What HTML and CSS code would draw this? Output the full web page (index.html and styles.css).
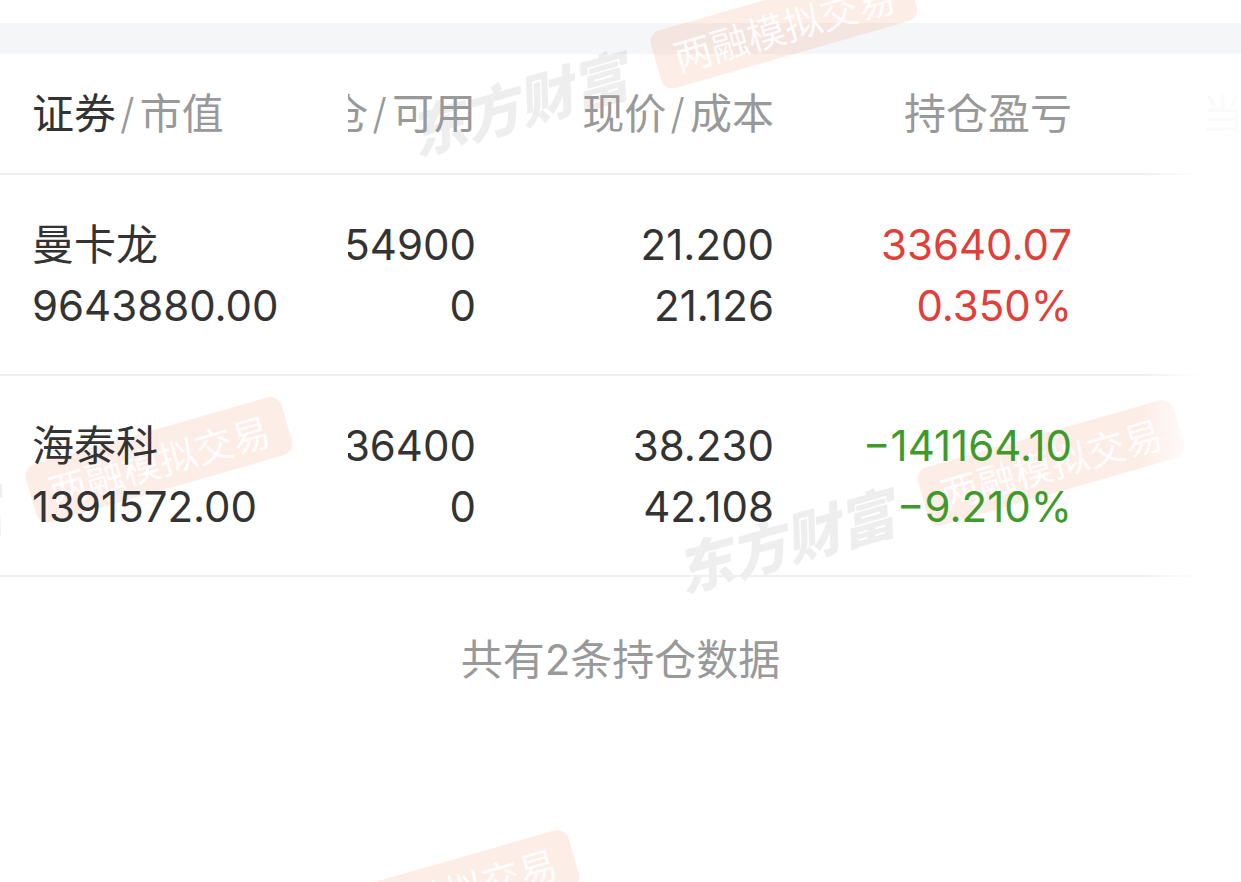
FILE: index.html
```html
<!DOCTYPE html>
<html lang="zh-CN">
<head>
<meta charset="utf-8">
<title>持仓</title>
<link rel="stylesheet" href="styles.css">
</head>
<body>
<div class="top-space"></div>
<div class="band"></div>

<div class="table">
  <div class="row head">
    <div class="fixed"><div class="hline"><span class="dark">证券</span><span class="sl">/</span>市值</div></div>
    <div class="view">
      <div class="track">
        <div class="c"><div class="hline">持仓<span class="sl">/</span>可用</div></div>
        <div class="c"><div class="hline">现价<span class="sl">/</span>成本</div></div>
        <div class="c"><div class="hline">持仓盈亏</div></div>
        <div class="c"><div class="hline">当日盈亏</div></div>
      </div>
    </div>
  </div>

  <div class="row item">
    <div class="fixed"><div class="line">曼卡龙</div><div class="line">9643880.00</div></div>
    <div class="view">
      <div class="track">
        <div class="c"><div class="line">54900</div><div class="line">0</div></div>
        <div class="c"><div class="line">21.200</div><div class="line">21.126</div></div>
        <div class="c up"><div class="line">33640.07</div><div class="line">0.350%</div></div>
        <div class="c"><div class="line">0.00</div><div class="line">0.00%</div></div>
      </div>
    </div>
  </div>

  <div class="row item">
    <div class="fixed"><div class="line">海泰科</div><div class="line">1391572.00</div></div>
    <div class="view">
      <div class="track">
        <div class="c"><div class="line">36400</div><div class="line">0</div></div>
        <div class="c"><div class="line">38.230</div><div class="line">42.108</div></div>
        <div class="c down"><div class="line">−141164.10</div><div class="line">−9.210%</div></div>
        <div class="c"><div class="line">0.00</div><div class="line">0.00%</div></div>
      </div>
    </div>
  </div>

  <div class="fade"></div>
</div>

<div class="footer">共有2条持仓数据</div>

<div class="wm wm1"><span class="wm-brand">东方财富</span><span class="wm-badge">两融模拟交易</span></div>
<div class="wm wm2"><span class="wm-brand">东方财富</span><span class="wm-badge">两融模拟交易</span></div>
<div class="wm wm3"><span class="wm-brand">东方财富</span><span class="wm-badge">两融模拟交易</span></div>
<div class="wm wm4"><span class="wm-brand">东方财富</span><span class="wm-badge">两融模拟交易</span></div>
</body>
</html>
```

FILE: styles.css
```css
* { box-sizing: border-box; margin: 0; padding: 0; }

html, body {
  width: 1241px;
  height: 882px;
  overflow: hidden;
  background: #fff;
}

body {
  position: relative;
  font-family: Inter, "Noto Sans CJK SC", sans-serif;
  color: #333;
}

.top-space { height: 23px; }

.band {
  height: 31px;
  background: #f5f6f8;
}

.table {
  position: relative;
  z-index: 2;
}

.row {
  display: flex;
  border-bottom: 2px solid #efefef;
}

.head { height: 121px; }
.item { height: 201px; }

.fixed {
  width: 348px;
  flex: none;
  padding-left: 32px;
  display: flex;
  flex-direction: column;
  justify-content: center;
}

.view {
  flex: 1;
  overflow: hidden;
  display: flex;
}

.track {
  display: flex;
  flex: none;
  margin-left: -170px;
}

.c {
  width: 298px;
  flex: none;
  text-align: right;
  display: flex;
  flex-direction: column;
  justify-content: center;
}

.hline {
  font-size: 42px;
  line-height: 60px;
  color: #999;
  white-space: nowrap;
}

.hline .dark { color: #333; }

.sl {
  padding: 0 5px 0 4px;
  font-weight: 300;
}

.line {
  font-size: 42px;
  line-height: 61px;
  white-space: nowrap;
}

.up { color: #e0403a; }
.down { color: #3e9a2c; }

.fade {
  position: absolute;
  top: 0;
  right: 0;
  width: 100px;
  height: 100%;
  background: linear-gradient(to right, rgba(255,255,255,0), rgba(255,255,255,0.93) 55%, rgba(255,255,255,0.97));
}

.footer {
  height: 158px;
  display: flex;
  align-items: center;
  justify-content: center;
  font-size: 42px;
  color: #999;
}

/* watermark */
.wm {
  position: absolute;
  z-index: 1;
  height: 64px;
  display: flex;
  align-items: center;
  white-space: nowrap;
  transform: rotate(-16deg);
  transform-origin: 0 50%;
  pointer-events: none;
  font-family: "Noto Sans CJK SC", sans-serif;
}

.wm-brand {
  font-size: 56px;
  line-height: 64px;
  font-weight: 900;
  font-style: italic;
  color: rgba(0, 0, 0, 0.065);
}

.wm-badge {
  font-size: 38px;
  line-height: 60px;
  padding: 0 19px;
  margin-left: 32px;
  border-radius: 12px;
  background: rgba(238, 110, 60, 0.12);
  color: rgba(255, 255, 255, 0.9);
}

.wm1 { left: 410px; top: 101px; }
.wm2 { left: -215px; top: 535px; }
.wm3 { left: 677px; top: 538px; }
.wm4 { left: 72px; top: 968px; }
```
